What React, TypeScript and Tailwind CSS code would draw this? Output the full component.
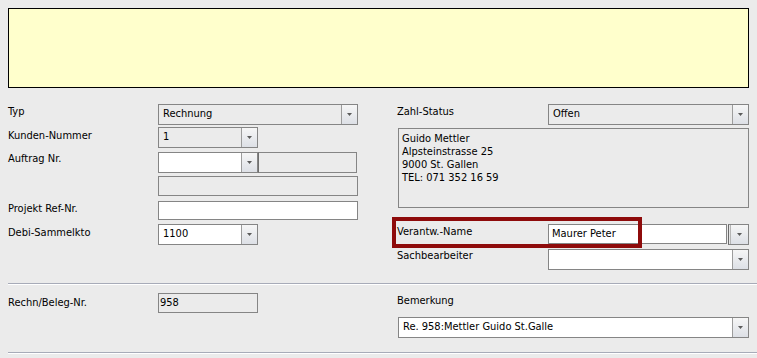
const Arrow = () => (
  <svg width="5" height="3" viewBox="0 0 5 3">
    <path d="M0 0h5L2.5 3z" fill="#5b5b5b" />
  </svg>
);

const DropButton = ({ className = "" }: { className?: string }) => (
  <div
    className={`flex w-[16px] shrink-0 items-center justify-center border-l border-[#9c9c9c] bg-linear-to-b from-[#f6f6f6] to-[#dde0e6] ${className}`}
  >
    <Arrow />
  </div>
);

const Combo = ({
  value = "",
  white,
  className = "",
  pad = "pl-[4px]",
}: {
  value?: string;
  white?: boolean;
  className?: string;
  pad?: string;
}) => (
  <div
    className={`flex h-[21px] border border-[#858585] ${
      white ? "bg-white" : "bg-[#ebebeb]"
    } ${className}`}
  >
    <div className={`flex flex-1 items-center ${pad}`}>{value}</div>
    <DropButton />
  </div>
);

const Label = ({ text, className = "" }: { text: string; className?: string }) => (
  <div className={`w-[150px] shrink-0 leading-[13px] ${className}`}>{text}</div>
);

export default function App() {
  return (
    <div className="h-[358px] w-[757px] overflow-hidden bg-[#ebebeb] font-['DejaVu_Sans_Condensed','Liberation_Sans',sans-serif] text-[11px] text-black">
      {/* Memo */}
      <div className="px-[8px] pt-[8px]">
        <div className="h-[80px] w-[741px] border border-black bg-[#ffffcc]" />
      </div>

      {/* Main fields */}
      <div className="mt-[16px] flex">
        <div className="ml-[8px] flex w-[350px] flex-col">
          <div className="flex">
            <Label text="Typ" className="pt-[1px]" />
            <Combo value="Rechnung" className="w-[200px]" />
          </div>
          <div className="mt-[2px] flex">
            <Label text="Kunden-Nummer" className="pt-[2px]" />
            <Combo value="1" className="w-[100px]" />
          </div>
          <div className="mt-[4px] flex">
            <Label text="Auftrag Nr." />
            <Combo white className="w-[100px]" />
            <div className="h-[21px] w-[99px] border border-[#858585] border-l-[#6f6f6f] bg-[#ebebeb]" />
          </div>
          <div className="mt-[3px] flex">
            <div className="w-[150px] shrink-0" />
            <div className="h-[20px] w-[200px] border border-[#858585] bg-[#ebebeb]" />
          </div>
          <div className="mt-[5px] flex">
            <Label text="Projekt Ref-Nr." className="pt-[1px]" />
            <div className="h-[19px] w-[200px] border border-[#858585] bg-white" />
          </div>
          <div className="mt-[4px] flex">
            <Label text="Debi-Sammelkto" className="pt-[2px]" />
            <Combo value="1100" white className="w-[100px]" />
          </div>
        </div>

        <div className="ml-[34px] flex w-[357px] flex-col">
          <div className="flex">
            <Label text="Zahl-Status" className="pl-[5px] pt-[1px] !w-[156px]" />
            <Combo value="Offen" className="w-[201px]" />
          </div>
          <div className="ml-[6px] mt-[3px] h-[80px] w-[351px] border border-[#858585] px-[3px] pt-[3px] leading-[13px]">
            <div>Guido Mettler</div>
            <div>Alpsteinstrasse 25</div>
            <div>9000 St. Gallen</div>
            <div>TEL: 071 352 16 59</div>
          </div>
          <div className="relative mt-[16px] flex">
            <Label text="Verantw.-Name" className="pl-[5px] pt-[1px] !w-[156px]" />
            <div className="flex h-[20px] w-[179px] items-center border border-[#858585] bg-white pl-[3px]">
              Maurer Peter
            </div>
            <div className="ml-[1px] flex h-[21px] w-[21px] border border-[#858585] border-l-[#6a6a6a] bg-white">
              <div className="w-[2px] border-r border-[#b5b5b5] bg-[#e6e6e6]" />
              <DropButton className="flex-1 border-l-0" />
            </div>
            <div className="pointer-events-none absolute left-0 top-[-7px] h-[31px] w-[250px] border-[4px] border-[#8e0b0b]" />
          </div>
          <div className="mt-[4px] flex">
            <Label text="Sachbearbeiter" className="pl-[5px] !w-[156px]" />
            <Combo white className="w-[201px]" />
          </div>
        </div>
      </div>

      {/* Separator */}
      <div className="ml-[8px] mt-[13px] h-[2px] border-t border-b border-t-[#a7abb8] border-b-white" />

      {/* Bottom section */}
      <div className="mt-[8px] flex">
        <div className="ml-[8px] flex w-[350px]">
          <Label text="Rechn/Beleg-Nr." className="pt-[3px]" />
          <div className="flex h-[20px] w-[100px] items-center border border-[#858585] bg-[#ebebeb] pl-[1px]">
            958
          </div>
        </div>
        <div className="ml-[34px] flex w-[357px] flex-col">
          <div className="pl-[5px] pt-[1px] leading-[13px]">Bemerkung</div>
          <Combo
            value="Re. 958:Mettler Guido St.Galle"
            white
            className="ml-[6px] mt-[10px] w-[351px]"
          />
        </div>
      </div>

      <div className="ml-[8px] mt-[14px] h-[2px] border-t border-b border-t-[#a7abb8] border-b-white" />
    </div>
  );
}
